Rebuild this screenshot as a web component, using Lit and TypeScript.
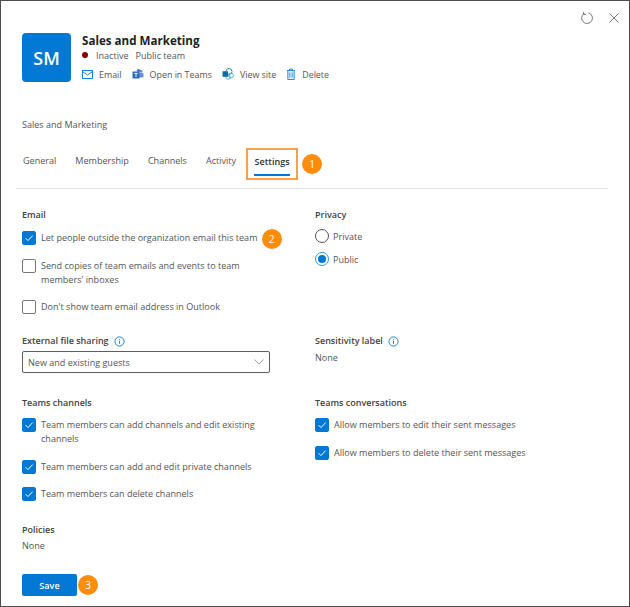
import { LitElement, html, css } from "lit";
import { customElement } from "lit/decorators.js";

const check = html`<span class="box on"><svg width="10" height="10" viewBox="0 0 10 10"><path d="M1.600 5.200 4 7.600 8.600 2.600" fill="none" stroke="#fff" stroke-width="1"/></svg></span>`;
const uncheck = html`<span class="box"></span>`;
const info = html`<svg class="info" width="11" height="11" viewBox="0 0 11 11"><circle cx="5.500" cy="5.500" r="4.600" fill="none" stroke="#0078d4" stroke-width=".9"/><path d="M5.500 4.800v3M5.500 3v.9" stroke="#0078d4" stroke-width=".9"/></svg>`;

@customElement("app-root")
export class AppRoot extends LitElement {
  static styles = css`
    :host { display: block; width: 630px; height: 607px; box-sizing: border-box; border: 1px solid #4d4d4d; background: #fff; overflow: hidden;
      font-family: "Open Sans", "Noto Sans", sans-serif; font-size: 9.05px; color: #424242; }
    .top { display: flex; justify-content: flex-end; align-items: center; gap: 15px; height: 32px; padding: 1px 10px 0 0; box-sizing: border-box; }
    .head { display: flex; gap: 11px; padding-left: 21px; }
    .avatar { width: 49px; height: 49px; border-radius: 4px; background: #0078d4; color: #fff; font-size: 18px; font-weight: 600; display: flex; align-items: center; justify-content: center; }
    .title { font-size: 11.6px; font-weight: 700; color: #201f1e; line-height: 16px; }
    .status { display: flex; align-items: center; height: 14px; margin-top: -1px; color: #555; }
    .dot { width: 6px; height: 6px; border-radius: 50%; background: #8b0000; margin-right: 8px; }
    .status .sep { margin-left: 7px; }
    .actions { display: flex; align-items: center; gap: 10px; margin-top: 3px; height: 18px; color: #555; font-size: 8.9px; }
    .actions span { display: flex; align-items: center; gap: 6px; }
    .crumb { margin: 35px 0 0 21px; height: 14px; line-height: 14px; color: #555; }
    .tabs { display: flex; align-items: center; margin: 15px 21px 0 15px; padding-left: 7px; height: 41px; border-bottom: 1px solid #e4e4e4; color: #555; }
    .tabs .t { margin-right: 19px; position: relative; top: -7px; }
    .tabbox { border: 2px solid #f7a24b; width: 52px; height: 32px; box-sizing: border-box; display: flex; flex-direction: column; align-items: center; margin: -7px 0 0 -9px; padding-top: 5px; color: #323130; font-weight: 600; }
    .tabbox i { display: block; width: 36px; height: 2px; background: #0078d4; margin-top: 6px; }
    .badge { width: 20px; height: 20px; border-radius: 50%; background: #ff8c0a; color: #fff; font-size: 10px; display: inline-flex; align-items: center; justify-content: center; flex: none; }
    .tabs .badge { margin: -7px 0 0 4px; }
    .grid { display: grid; grid-template-columns: 293px 1fr; padding-left: 21px; }
    h4 { margin: 0; font-size: 9px; font-weight: 600; color: #424242; line-height: 14px; }
    .row { display: flex; gap: 5px; align-items: flex-start; line-height: 14px; color: #555; }
    .box { width: 14px; height: 14px; box-sizing: border-box; border: 1px solid #777; border-radius: 2px; flex: none; display: flex; align-items: center; justify-content: center; }
    .box.on { background: #0078d4; border-color: #0078d4; }
    .email { padding-top: 19px; height: 126px; }
    .email .c1 { margin-top: 9px; } .email .c2 { margin-top: 10px; width: 240px; } .email .c3 { margin-top: 13px; }
    .email .badge { margin: -2px 0 0 -1px; }
    .radio { display: flex; align-items: center; gap: 4px; color: #555; height: 14px; }
    .radio b { width: 14px; height: 14px; box-sizing: border-box; border-radius: 50%; border: 1px solid #555; display: flex; align-items: center; justify-content: center; }
    .radio b.on { border-color: #3a96dd; } .radio b.on::after { content: ""; width: 8px; height: 8px; border-radius: 50%; background: #0078d4; }
    .privacy { padding-top: 19px; }
    .privacy .radio { margin-top: 7px; } .privacy .radio + .radio { margin-top: 9px; }
    .ext { height: 59px; }
    .lab { display: flex; align-items: center; gap: 5px; }
    .select { margin-top: 3px; width: 248px; height: 22px; box-sizing: border-box; border: 1px solid #605e5c; border-radius: 2px; display: flex; align-items: center; justify-content: space-between; padding: 0 5px; color: #555; }
    .none { color: #555; line-height: 14px; margin-top: 3px; }
    .ch { margin-top: 3px; height: 121px; }
    .ch .row { margin-top: 8px; width: 240px; } .ch .row + .row { margin-top: 13.5px; }
    .policies { padding-left: 21px; margin-top: 6px; }
    .policies .none { margin-top: 2px; }
    .foot { display: flex; align-items: center; gap: 1px; padding: 21px 0 0 21px; }
    .save { width: 55px; height: 22px; background: #0078d4; color: #fff; font-weight: 600; border-radius: 2px; display: flex; align-items: center; justify-content: center; }
  `;
  render() {
    return html`
      <div class="top">
        <svg width="14" height="14" viewBox="0 0 14 14"><path d="M4 2.600A5.400 5.400 0 1 0 8.600 1.900" fill="none" stroke="#666" stroke-width=".9"/><path d="M3.600 1v2.400h2.400" fill="none" stroke="#666" stroke-width=".9"/></svg>
        <svg width="10" height="10" viewBox="0 0 10 10"><path d="M.5.5l9 9M9.500.5l-9 9" stroke="#666" stroke-width=".9"/></svg>
      </div>
      <div class="head">
        <div class="avatar">SM</div>
        <div>
          <div class="title">Sales and Marketing</div>
          <div class="status"><i class="dot"></i>Inactive<span class="sep">Public team</span></div>
          <div class="actions">
            <span><svg width="11" height="9" viewBox="0 0 11 9"><rect x=".5" y=".5" width="10" height="8" fill="none" stroke="#0078d4" stroke-width=".9"/><path d="M.5 1.500l5 3.500 5-3.500" fill="none" stroke="#0078d4" stroke-width=".9"/></svg>Email</span>
            <span><svg width="12" height="12" viewBox="0 0 12 12"><circle cx="9" cy="3.200" r="1.500" fill="#6c8ed8"/><circle cx="6.500" cy="2.500" r="1.600" fill="#4a6fc4"/><rect x="6" y="5" width="5.500" height="4.500" rx="1" fill="#6c8ed8"/><rect x=".5" y="3.500" width="7" height="7" rx=".6" fill="#2b6cb8"/><path d="M2.200 5.400h3.600M4 5.400v3.600" stroke="#fff" stroke-width=".9"/></svg>Open in Teams</span>
            <span><svg width="12" height="12" viewBox="0 0 12 12"><circle cx="7" cy="3.500" r="3" fill="none" stroke="#2e8bc0" stroke-width="1"/><circle cx="9" cy="7.500" r="2.400" fill="none" stroke="#5bb0d8" stroke-width="1"/><circle cx="6" cy="9" r="2.200" fill="none" stroke="#5bb0d8" stroke-width="1"/><rect x=".5" y="3.200" width="5.600" height="5.600" rx=".6" fill="#0b6a9e"/></svg>View site</span>
            <span><svg width="10" height="12" viewBox="0 0 10 12"><path d="M1 2.500h8M3.500 2.500V1h3v1.500M1.800 2.500v9h6.400v-9" fill="#dcecf8" stroke="#0078d4" stroke-width=".8"/><path d="M3.800 4.500v5M6.200 4.500v5" stroke="#0078d4" stroke-width=".7"/></svg>Delete</span>
          </div>
        </div>
      </div>
      <div class="crumb">Sales and Marketing</div>
      <div class="tabs">
        <span class="t">General</span><span class="t">Membership</span><span class="t">Channels</span><span class="t">Activity</span>
        <div class="tabbox">Settings<i></i></div>
        <span class="badge">1</span>
      </div>
      <div class="grid">
        <div class="email">
          <h4>Email</h4>
          <div class="row c1">${check}<span>Let people outside the organization email this team</span><span class="badge">2</span></div>
          <div class="row c2">${uncheck}<span>Send copies of team emails and events to team members' inboxes</span></div>
          <div class="row c3">${uncheck}<span>Don't show team email address in Outlook</span></div>
        </div>
        <div class="privacy">
          <h4>Privacy</h4>
          <div class="radio"><b></b>Private</div>
          <div class="radio"><b class="on"></b>Public</div>
        </div>
        <div class="ext">
          <h4 class="lab">External file sharing ${info}</h4>
          <div class="select">New and existing guests<svg width="10" height="6" viewBox="0 0 10 6"><path d="M.5.5 5 5 9.500.5" fill="none" stroke="#888" stroke-width=".8"/></svg></div>
        </div>
        <div class="ext">
          <h4 class="lab">Sensitivity label ${info}</h4>
          <div class="none">None</div>
        </div>
        <div class="ch">
          <h4>Teams channels</h4>
          <div class="row">${check}<span>Team members can add channels and edit existing channels</span></div>
          <div class="row">${check}<span>Team members can add and edit private channels</span></div>
          <div class="row">${check}<span>Team members can delete channels</span></div>
        </div>
        <div class="ch">
          <h4>Teams conversations</h4>
          <div class="row">${check}<span>Allow members to edit their sent messages</span></div>
          <div class="row">${check}<span>Allow members to delete their sent messages</span></div>
        </div>
      </div>
      <div class="policies"><h4>Policies</h4><div class="none">None</div></div>
      <div class="foot"><div class="save">Save</div><span class="badge">3</span></div>
    `;
  }
}
